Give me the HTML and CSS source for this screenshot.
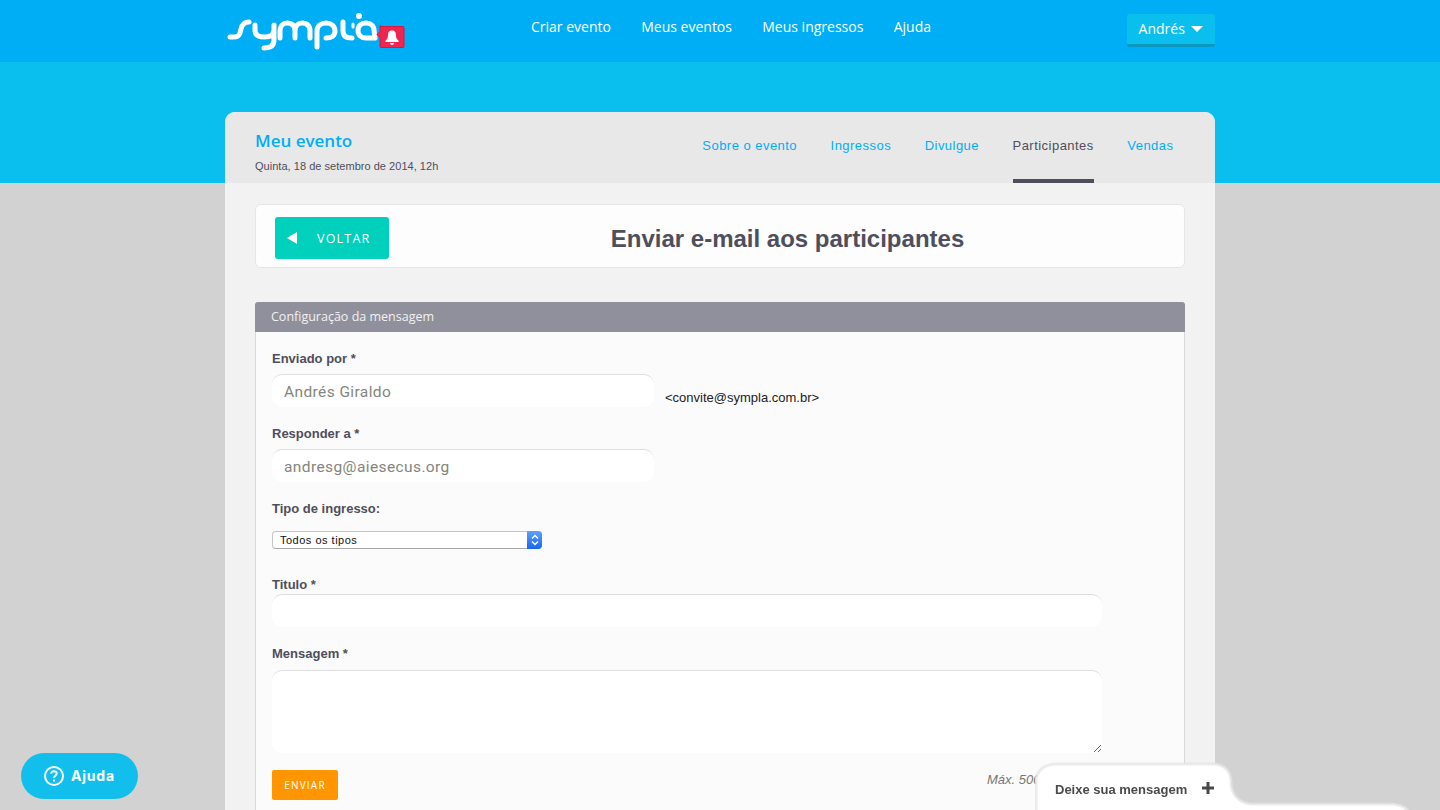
FILE: index.html
```html
<!DOCTYPE html>
<html lang="pt-BR">

<head>
    <meta charset="UTF-8">
    <meta name="viewport" content="width=device-width, initial-scale=1.0">
    <title>Enviar e-mail aos participantes</title>
    <link rel="stylesheet" href="styles.css">
</head>

<body>
    <header class="topbar">
        <div class="wrap topbar-inner">
            <a class="logo" href="#" aria-label="Sympla">
                <svg width="185" height="62" viewBox="225 0 185 62">
                    <g fill="none" stroke="#fff" stroke-width="5" stroke-linecap="round" stroke-linejoin="round">
                        <path d="M230 37h4c6 0 6-4 7-8s3-7 8-7" />
                        <path d="M255 25v5c0 5 3 7 9 7s10-2 10-7v-5v15c0 5-3 8-10 8" />
                        <path d="M280 38v-7c0-5 3-8 7-8 5 0 8 3 8 8v7M295 31c0-5 3-8 7-8 5 0 8 3 8 8v7" />
                        <path d="M317 47V31c0-5 4-8 9-8s9 3 9 8-4 7-9 7" />
                        <path d="M343 22v9c0 5 3 7 9 7" />
                        <path d="M375 38h-9c-5 0-8-3-8-7.500s3-7.500 8-7.500 8 3 8 7.500z" />
                    </g>
                    <path d="M353 24v3" stroke="#fff" stroke-width="3" stroke-linecap="round" />
                    <circle cx="359" cy="16" r="3" fill="#fff" />
                    <path d="M381 26.500h22a1 1 0 0 1 1 1v19a1 1 0 0 1-1 1h-22a1 1 0 0 1-1-1v-9l-3-3 3-3v-5a1 1 0 0 1 1-1z" fill="#f0244f" stroke="#d11a42" />
                    <path d="M392 30.500c3 0 4 2 4 5 0 2.500 1 4 2.500 5v1.500h-13V40.500c1.500-1 2.500-2.500 2.500-5 0-3 1-5 4-5zM390 43h4a2 2 0 0 1-4 0z" fill="#fff" />
                </svg>
            </a>
            <nav class="main-nav">
                <a href="#">Criar evento</a>
                <a href="#">Meus eventos</a>
                <a href="#">Meus ingressos</a>
                <a href="#">Ajuda</a>
            </nav>
            <button class="user-btn" type="button">Andrés <span class="caret"></span></button>
        </div>
    </header>

    <main class="wrap card">
        <div class="card-head">
            <div class="event-info">
                <h2>Meu evento</h2>
                <p>Quinta, 18 de setembro de 2014, 12h</p>
            </div>
            <nav class="tabs">
                <a href="#">Sobre o evento</a>
                <a href="#">Ingressos</a>
                <a href="#">Divulgue</a>
                <a href="#" class="active">Participantes</a>
                <a href="#">Vendas</a>
            </nav>
        </div>

        <div class="card-body">
            <div class="title-bar">
                <a class="back-btn" href="#"><span class="back-arrow"></span>VOLTAR</a>
                <h1>Enviar e-mail aos participantes</h1>
            </div>

            <section class="panel">
                <div class="panel-head">Configuração da mensagem</div>
                <form class="panel-body">
                    <label for="sender">Enviado por *</label>
                    <div class="sender-row">
                        <input type="text" id="sender" class="short" value="Andrés Giraldo">
                        <span>&lt;convite@sympla.com.br&gt;</span>
                    </div>

                    <label for="reply" class="gap-top">Responder a *</label>
                    <input type="text" id="reply" class="short" value="andresg@aiesecus.org">

                    <label for="ticket" class="gap-top">Tipo de ingresso:</label>
                    <div class="select-box">
                        <select id="ticket">
                            <option>Todos os tipos</option>
                        </select>
                        <span class="stepper">
                            <svg width="8" height="12" viewBox="0 0 8 12" fill="none" stroke="#fff" stroke-width="1.4">
                                <path d="M1 4.500l3-3 3 3M1 7.500l3 3 3-3" />
                            </svg>
                        </span>
                    </div>

                    <label for="title" class="title-label">Titulo *</label>
                    <input type="text" id="title" class="wide">

                    <label for="message" class="message-label">Mensagem *</label>
                    <textarea id="message" class="wide"></textarea>

                    <div class="form-foot">
                        <button type="submit" class="send-btn">ENVIAR</button>
                        <em>Máx. 5000 caracteres</em>
                    </div>
                </form>
            </section>
        </div>
    </main>

    <a class="help-btn" href="#">
        <svg width="22" height="22" viewBox="0 0 22 22" fill="none" stroke="#fff" stroke-width="2">
            <circle cx="11" cy="11" r="9" />
            <path d="M8.300 8.800c0-1.700 1.200-2.600 2.700-2.600s2.700.9 2.700 2.400c0 2.200-2.700 2-2.700 4.200" />
            <path d="M11 14.500v2" />
        </svg>
        <span class="help-text">Ajuda</span>
    </a>

    <!-- chat tab with the wide lower lip -->
    <div class="chat-tab">
        <svg class="chat-shape" width="390" height="50" viewBox="0 0 390 50">
            <path d="M1 60V22C1 10 10 4 22 4H178C190 4 196 12 196 22C196 34 204 44 218 44H355C364 44 370 46 374 52V60z" fill="#fff" stroke="#e4e4e4" stroke-opacity="0.7" stroke-width="3" />
        </svg>
        <span class="chat-text">Deixe sua mensagem</span>
        <svg class="chat-plus" width="12" height="12" viewBox="0 0 12 12">
            <path d="M4.500 0h3v4.500H12v3H7.500V12h-3V7.500H0v-3h4.500z" fill="#4a4a4a" />
        </svg>
    </div>
</body>

</html>
```

FILE: styles.css
```css
html,
body {
    height: 100%;
    overflow: hidden;
}

/* Blue band behind the top of the card, gray below */
body {
    margin: 0;
    background: linear-gradient(#0abfee 183px, #d2d2d2 183px);
    font-family: "Liberation Sans", Arial, sans-serif;
    color: #4f4e5c;
}

a {
    text-decoration: none;
}

.wrap {
    width: 990px;
    margin: 0 auto;
}

/* Top bar */
.topbar {
    height: 62px;
    background: #00aef6;
}

.topbar-inner {
    display: flex;
    align-items: flex-start;
    height: 62px;
}

.logo {
    display: block;
    width: 306px;
    height: 62px;
}

.main-nav {
    display: flex;
    gap: 30.300px;
    padding-top: 17px;
}

.main-nav a {
    color: #fff;
    font-family: "Open Sans", sans-serif;
    font-size: 14px;
    line-height: 20px;
}

.user-btn {
    margin: 14px 0 0 auto;
    width: 88px;
    height: 33px;
    padding: 0 0 2px;
    background: #0abfee;
    border: none;
    border-bottom: 3px solid #0a98bd;
    border-radius: 3px;
    color: #fff;
    font-family: "Open Sans", sans-serif;
    font-size: 14px;
}

.caret {
    display: inline-block;
    margin-left: 3px;
    vertical-align: 2px;
    border-left: 6px solid transparent;
    border-right: 6px solid transparent;
    border-top: 6px solid #fff;
}

/* Event card */
.card {
    margin-top: 50px;
    background: #f2f2f2;
    border-radius: 10px 10px 0 0;
}

.card-head {
    display: flex;
    justify-content: space-between;
    height: 71px;
    padding: 0 41.500px 0 30px;
    background: #e8e8e8;
    border-radius: 10px 10px 0 0;
}

.event-info h2 {
    margin: 17px 0 0;
    color: #00aef6;
    font-family: "Open Sans", sans-serif;
    font-size: 17px;
    font-weight: 600;
    line-height: 24px;
}

.event-info p {
    margin: 6px 0 0;
    font-size: 11px;
    line-height: 14px;
    letter-spacing: 0.03px;
}

.tabs {
    display: flex;
    gap: 33.500px;
}

.tabs a {
    height: 67px;
    padding-top: 25px;
    box-sizing: border-box;
    color: #00aef6;
    font-size: 13px;
    line-height: 17px;
    letter-spacing: 0.47px;
}

.tabs a.active {
    height: 71px;
    color: #4f4e5c;
    border-bottom: 4px solid #4f4e5c;
}

.card-body {
    padding: 21px 30px 0;
}

.title-bar {
    display: flex;
    align-items: flex-start;
    height: 64px;
    padding: 12px 0 0 19px;
    box-sizing: border-box;
    background: #fdfdfd;
    border: 1px solid #e6e6e6;
    border-radius: 6px;
}

.back-btn {
    display: flex;
    align-items: center;
    width: 114px;
    height: 42px;
    box-sizing: border-box;
    padding-left: 12px;
    background: #00d0bc;
    border-radius: 3px;
    color: #fff;
    font-family: "Open Sans", sans-serif;
    font-size: 12.500px;
    letter-spacing: 1.2px;
}

.back-arrow {
    margin-right: 20px;
    border-top: 6px solid transparent;
    border-bottom: 6px solid transparent;
    border-right: 10px solid #fff;
}

.title-bar h1 {
    flex: 1;
    margin: 8px 0 0;
    padding-left: 2px;
    font-size: 24px;
    line-height: 28px;
    text-align: center;
}

/* Message settings panel */
.panel {
    margin-top: 34px;
}

.panel-head {
    height: 30px;
    padding-left: 16px;
    background: #8f909c;
    border-radius: 3px 3px 0 0;
    color: #f2f2f2;
    font-family: "Open Sans", sans-serif;
    font-size: 12.500px;
    line-height: 29px;
}

.panel-body {
    display: flex;
    flex-direction: column;
    align-items: flex-start;
    padding: 17px 16px 60px;
    background: #fbfbfb;
    border: 1px solid #d8d8d8;
    border-top: none;
}

.panel-body label {
    position: relative;
    top: 1px;
    font-size: 13px;
    font-weight: bold;
    line-height: 18px;
}

.panel-body input,
.panel-body textarea {
    display: block;
    box-sizing: border-box;
    margin-top: 7px;
    padding: 1px 12px 0;
    background: #fff;
    border: none;
    border-top: 1px solid #dedede;
    border-radius: 10px;
    color: #85857c;
    font-family: Roboto, sans-serif;
    font-size: 15.500px;
    letter-spacing: 0.4px;
}

.panel-body input {
    height: 33px;
}

.short {
    width: 382px;
}

.wide {
    width: 830px;
}

.sender-row {
    display: flex;
    align-items: flex-end;
    gap: 11px;
    color: #222;
    font-size: 13px;
}

.sender-row span {
    padding-bottom: 2px;
}

.gap-top {
    margin-top: 17px;
}

.select-box {
    position: relative;
    width: 270px;
    height: 18px;
    margin-top: 14px;
}

.select-box select {
    display: block;
    width: 100%;
    height: 18px;
    padding: 0 0 0 7px;
    appearance: none;
    background: #fff;
    border: 1px solid #c4c4c4;
    border-bottom-color: #a8a8a8;
    border-radius: 4px;
    color: #111;
    font-family: "Liberation Sans", Arial, sans-serif;
    font-size: 11px;
    letter-spacing: 0.5px;
}

.stepper {
    position: absolute;
    top: 0;
    right: 0;
    display: flex;
    align-items: center;
    justify-content: center;
    width: 15px;
    height: 18px;
    background: linear-gradient(#5fa2fa, #1668ee);
    border-radius: 0 4px 4px 0;
}

.title-label {
    margin-top: 26px;
}

.panel-body .title-label + input {
    margin-top: 1px;
}

.message-label {
    margin-top: 17px;
}

.panel-body textarea {
    height: 83px;
    margin-top: 8px;
}

.form-foot {
    display: flex;
    justify-content: space-between;
    align-items: flex-start;
    width: 840px;
    margin-top: 17px;
}

.send-btn {
    width: 66px;
    height: 30px;
    padding: 0;
    background: #ff9600;
    border: none;
    border-radius: 2px;
    color: #fff;
    font-family: "Open Sans", sans-serif;
    font-size: 10px;
    letter-spacing: 1.2px;
}

.form-foot em {
    margin-top: 1px;
    color: #77776f;
    font-size: 13px;
    line-height: 18px;
}

/* Floating helpers pinned to the bottom of the window */
.help-btn {
    position: fixed;
    left: 21px;
    bottom: 11px;
    display: flex;
    align-items: center;
    gap: 6px;
    width: 117px;
    height: 46px;
    box-sizing: border-box;
    padding-left: 22px;
    background: #12bfec;
    border-radius: 23px;
    color: #fff;
    font-family: Inter, sans-serif;
    font-size: 14px;
    font-weight: 700;
    letter-spacing: 0.8px;
}

.help-text {
    margin-top: -1px;
}

.chat-tab {
    position: fixed;
    left: 1035px;
    bottom: 0;
    width: 390px;
    height: 50px;
}

.chat-shape {
    display: block;
}

.chat-text {
    position: absolute;
    left: 20px;
    top: 21px;
    color: #4a4a4a;
    font-size: 13px;
    font-weight: bold;
    line-height: 18px;
}

.chat-plus {
    position: absolute;
    left: 167px;
    top: 22px;
}
```
